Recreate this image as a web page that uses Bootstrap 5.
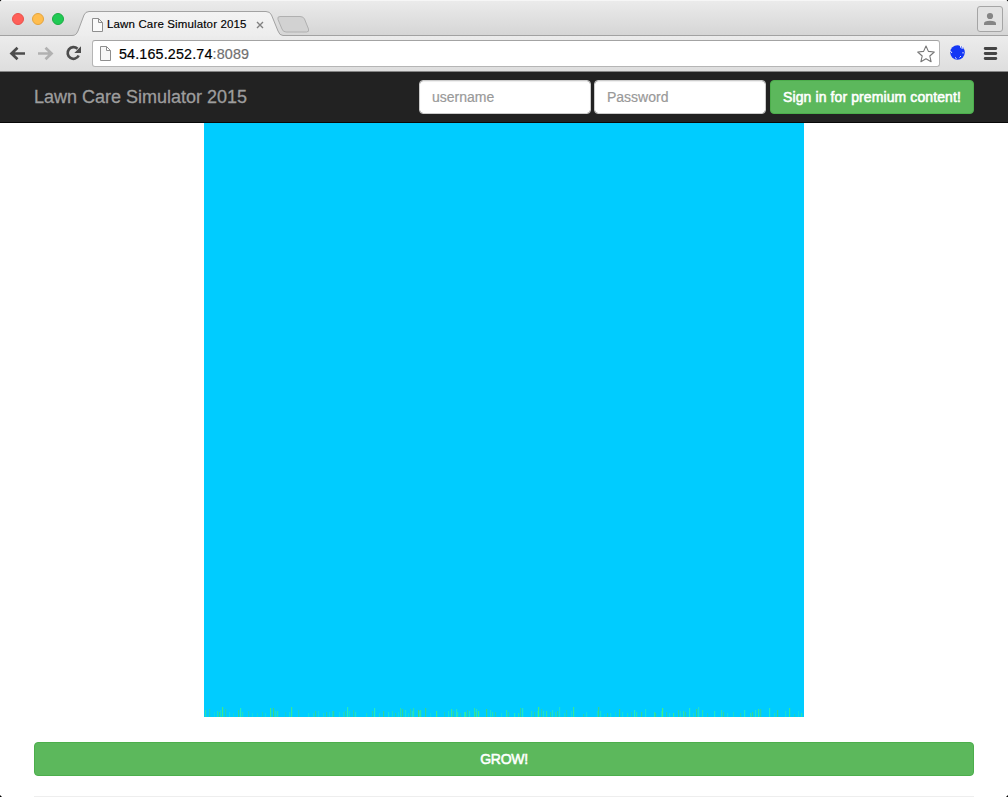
<!DOCTYPE html>
<html lang="en">
<head>
<meta charset="utf-8">
<title>Lawn Care Simulator 2015</title>
<link href="https://cdn.jsdelivr.net/npm/bootstrap@5.3.0/dist/css/bootstrap.min.css" rel="stylesheet">
<style>
body{font-family:"Liberation Sans",Arial,sans-serif;font-size:14px;line-height:20px;color:#333;height:797px;overflow:hidden;background:#fff}
svg{display:block;flex:none}
.window-frame{height:797px;overflow:hidden}
.tabstrip{height:36px;background:linear-gradient(#ebebeb,#d5d5d5);border-top:1px solid #f6f6f6}
.tab-shape{left:0;top:0}
.lights{width:74px;padding:12px 0 0 12px;gap:8px}
.light{width:12px;height:12px;border-radius:50%;border:1px solid}
.light-close{background:#ff5f58;border-color:#e9514b}
.light-min{background:#ffbd4e;border-color:#e3a43e}
.light-zoom{background:#20ca54;border-color:#1cab43}
.toolbar{height:36px;background:linear-gradient(#ececec,#dedede);border-bottom:1px solid #858585}
.address{width:848px;height:27px;border:1px solid #b5b5b5;border-top-color:#a3a3a3;border-radius:3px;background:#fff;padding:0 4px 0 7px}
.profile{width:26px;height:26px;right:5px;top:5px;border:1px solid #a5a5a5;border-radius:3px;background:#e2e2e2}
.site-nav{height:51px;background:#222;border-bottom:1px solid #080808;padding:0 34px}
.login-form{gap:3px}
.login-field{width:172px;height:34px;font-size:14px;padding:6px 12px;border:1px solid #ccc;border-radius:4px;box-shadow:inset 0 1px 1px rgba(0,0,0,.075)}
.login-field::placeholder{color:#999;opacity:1;-webkit-text-stroke:.2px #999}
.btn-grow{height:34px;background:#5cb85c;border:1px solid #4cae4c;border-radius:4px;color:#fff;font-size:14px;line-height:20px;padding:6px 0;-webkit-text-stroke:.55px #fff;white-space:nowrap}
.btn-grow:hover{background:#449d44;color:#fff}
.signin{width:204px;margin-left:1px;letter-spacing:.1px}
.grow-action{margin-top:25px;letter-spacing:-.3px}
.lawn{width:600px;height:594px;background:#0cf}
.page-body{padding:0 34px}
.divider{height:1px;background:#eee;margin-top:20px}
</style>
</head>
<body>
<div class="window-frame position-relative">
  <div class="tabstrip d-flex position-relative">
    <svg class="tab-shape position-absolute" width="1008" height="35" viewBox="0 1 1008 35">
      <defs><linearGradient id="tabFill" x1="0" y1="0" x2="0" y2="1"><stop offset="0" stop-color="#f3f3f3"/><stop offset="1" stop-color="#ececec"/></linearGradient></defs>
      <path d="M-2 35.500H72C75.500 35.500 76.500 34 78 31L84 15Q85.500 11.500 89 11.500H266Q270 11.500 271.500 15L278 31Q279.500 35.500 283 35.500H1010V40H-2Z" fill="url(#tabFill)" stroke="#a2a2a2"/>
      <path d="M280 16.500H300Q303.500 16.500 304.500 19L308.500 29Q309.500 32 306.500 32H286Q283 32 282 29L278 19.500Q277 16.500 280 16.500Z" fill="#d2d2d2" stroke="#b0b0b0"/>
    </svg>
    <div class="lights d-flex position-relative">
      <span class="light light-close"></span>
      <span class="light light-min"></span>
      <span class="light light-zoom"></span>
    </div>
    <div class="d-flex align-items-center position-relative mt-2 ms-3 ps-1 pt-1">
      <svg style="margin-left:-2px" width="11" height="14" viewBox="0 0 11 14" fill="#fafafa" stroke="#8e8e8e"><path d="M.5.5H6.500L10.500 4.500V13.500H.5ZM6.500.5V4.500H10.500"/></svg>
      <svg class="ms-1" width="140" height="16"><text x="0" y="11" textLength="139.500" font-family="Liberation Sans" font-size="11.500" fill="#000" stroke="#000" stroke-width=".15">Lawn Care Simulator 2015</text></svg>
      <svg style="margin-left:9px" width="8" height="8" viewBox="0 0 8 8" stroke="#808080" stroke-width="1.400"><path d="M1 1L7 7M7 1L1 7"/></svg>
    </div>
    <div class="profile position-absolute d-flex align-items-center justify-content-center">
      <svg width="14" height="14" viewBox="0 0 14 14" fill="#858585"><circle cx="7" cy="4" r="3.100"/><path d="M1 13V11.500Q1 8.800 7 8.800T13 11.500V13Z"/></svg>
    </div>
  </div>
  <div class="toolbar d-flex align-items-center">
    <svg width="92" height="35" viewBox="0 36 92 35" fill="none" stroke-width="2.700">
      <path d="M25 53.500H12M17.500 47.800L11.500 53.500L17.500 59.200" stroke="#4c4c4c"/>
      <path d="M38 53.500H51M45.500 47.800L51.500 53.500L45.500 59.200" stroke="#b1b1b1"/>
      <path d="M77.500 48.800A5.800 5.800 0 1 0 78.700 55.500" stroke="#4c4c4c"/><path d="M81 46.300V53H74.300Z" fill="#4c4c4c"/>
    </svg>
    <div class="address d-flex align-items-center">
      <svg width="11" height="15" viewBox="0 0 11 15" fill="#f7f7f7" stroke="#8e8e8e"><path d="M.5.5H6.500L10.500 4.500V14.500H.5ZM6.500.5V4.500H10.500"/></svg>
      <svg style="margin-left:8px" width="132" height="20"><text x="0" y="15" textLength="130" font-family="Liberation Sans" font-size="14.300" fill="#000" stroke="#000" stroke-width=".2">54.165.252.74<tspan fill="#707070" stroke="#707070">:8089</tspan></text></svg>
      <svg class="ms-auto" width="18" height="18" viewBox="0 0 18 18" fill="#fff" stroke="#777" stroke-width="1.100" stroke-linejoin="round"><path d="M9 1L11.400 6.400L17.300 7L12.800 11L14.100 16.700L9 13.700L3.900 16.700L5.200 11L.7 7L6.600 6.400Z"/></svg>
    </div>
    <svg width="68" height="35" viewBox="940 36 68 35">
      <circle cx="957.500" cy="52.500" r="7.300" fill="#1437f5"/>
      <path d="M960 45L961 48M962.500 46.500L962 49M950 50.500L952 53M955 57.500L956.500 58.500M959.500 57.500L961 56M963 52V53.500" stroke="#fff" stroke-width=".9" fill="none"/>
      <path d="M985.200 48.500H995.800M985.200 53.500H995.800M985.200 58.500H995.800" stroke="#444" stroke-width="2.900" stroke-linecap="round"/>
    </svg>
  </div>
  <nav class="site-nav d-flex align-items-center justify-content-between">
    <a class="text-decoration-none" href="#"><svg width="216" height="24"><text x="0" y="18" textLength="213" font-family="Liberation Sans" font-size="18" fill="#9d9d9d" stroke="#9d9d9d" stroke-width=".3">Lawn Care Simulator 2015</text></svg></a>
    <form class="login-form d-flex">
      <input class="form-control login-field" type="text" placeholder="username" aria-label="username">
      <input class="form-control login-field" type="password" placeholder="Password" aria-label="Password">
      <button class="btn btn-grow signin" type="button">Sign in for premium content!</button>
    </form>
  </nav>
  <main class="page-body">
    <svg class="lawn mx-auto" id="lawn" viewBox="0 0 600 594"></svg>
    <button class="btn btn-grow grow-action w-100 d-block" type="button">GROW!</button>
    <div class="divider"></div>
  </main>
  <svg class="position-absolute top-0 start-0" width="1008" height="797" style="pointer-events:none"><path d="M0 0H1.500L0 1.500ZM1008 0H1006.500L1008 1.500ZM0 795L2 797H0ZM1008 795L1006 797H1008Z"/></svg>
</div>
<script src="https://cdn.jsdelivr.net/npm/bootstrap@5.3.0/dist/js/bootstrap.bundle.min.js"></script>
<script>
// Each blade: x position, height, opacity
const blades = [
 [1,7,.5],[5,8,.35],[10,5,.2],[13,6,.5],[15,5,.6],[16,7,.4],[18,10,.8],[21,8,.4],[25,5,.35],[29,4,.2],[34,7,.6],[36,9,.8],[38,5,.4],[44,6,.3],[48,4,.3],[53,4,.2],[58,5,.3],[61,4,.3],
 [66,9,.8],[69,9,.7],[71,6,.4],[73,6,.5],[81,5,.2],[85,5,.4],[87,10,.7],[94,7,.3],[104,4,.4],[109,4,.3],[111,6,.5],[114,6,.3],[119,4,.3],[122,5,.4],[125,5,.3],[128,6,.3],[129,6,.5],[135,5,.3],
 [139,5,.3],[141,6,.4],[143,10,.8],[145,6,.3],[149,7,.4],[151,5,.5],[162,4,.3],[168,6,.4],[170,9,.8],[175,4,.3],[179,6,.6],[184,5,.5],[188,6,.3],[191,4,.4],[194,5,.3],[196,9,.5],[198,8,.6],[201,7,.5],[204,4,.3],
 [206,8,.4],[208,6,.5],[209,9,.5],[214,7,.8],[215,6,.5],[216,7,.6],[221,9,.6],[226,4,.2],[232,6,.8],[240,5,.3],[244,6,.5],[247,8,.7],[249,6,.4],[252,8,.6],[253,5,.5],[256,4,.3],[260,5,.7],[261,5,.7],[263,7,.4],[265,6,.6],[270,9,.6],[271,5,.5],[272,8,.6],[274,6,.8],
 [282,8,.7],[286,7,.5],[288,5,.5],[291,5,.4],[297,4,.3],[302,7,.6],[304,5,.4],[310,4,.7],[314,4,.5],[316,9,.5],[318,9,.7],[327,6,.4],[330,5,.4],[333,6,.3],[334,10,.9],[337,8,.4],[339,6,.5],[342,6,.6],[346,5,.5],[348,7,.5],[351,5,.4],[353,6,.5],[355,10,.5],[360,4,.3],[362,7,.3],[367,6,.3],[369,10,.7],[379,3,.4],[382,5,.4],
 [393,6,.3],[394,10,.6],[396,6,.5],[400,3,.2],[403,4,.5],[406,4,.4],[411,5,.2],[415,8,.7],[418,5,.4],[423,4,.4],[427,5,.3],[430,7,.8],[432,5,.5],[437,5,.6],[441,8,.5],[450,5,.6],[451,4,.5],[457,6,.4],[458,9,.9],[462,5,.4],[465,4,.4],[469,4,.7],[474,7,.5],[476,6,.3],[479,6,.6],[481,5,.5],[485,9,.8],[489,4,.3],[492,8,.6],[494,10,.5],[498,7,.5],[503,4,.3],[510,6,.7],
 [517,7,.5],[519,5,.5],[523,4,.4],[529,5,.3],[536,4,.4],[540,7,.7],[546,4,.5],[548,5,.6],[551,7,.6],[554,8,.7],[556,8,.5],[565,9,.8],[570,4,.4],[573,7,.6],[581,6,.4],[585,9,.8],[590,3,.3],[594,6,.3],[597,4,.5]
];
const tints = ['#48ee78', '#50d860', '#30f0b0'];
document.getElementById('lawn').innerHTML = blades.map(([x, h, o], i) =>
  `<rect x="${x}" y="${594 - h}" width="1.2" height="${h}" fill="${tints[i % 3]}" opacity="${Math.min(1, o * .9 + .1)}"/>`).join('');
</script>
</body>
</html>
